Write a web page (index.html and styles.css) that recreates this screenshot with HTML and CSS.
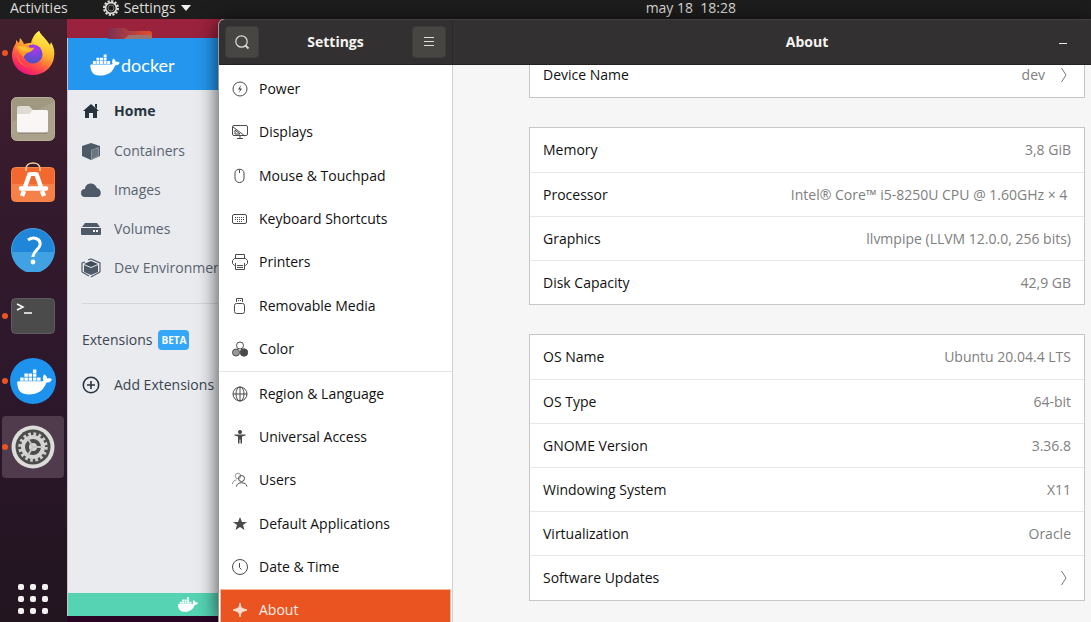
FILE: index.html
```html
<!DOCTYPE html>
<html lang="en">
<head>
  <meta charset="UTF-8" />
  <meta name="viewport" content="width=device-width, initial-scale=1.0" />
  <title>Settings - About</title>
  <link rel="stylesheet" href="styles.css">
</head>
<body>

  <!-- Shared shapes -->
  <svg class="sprite" width="0" height="0" aria-hidden="true">
    <symbol id="whale" viewBox="0 3 24 18">
      <path d="M5 6.1h2.4v2.3H5zM7.9 6.1h2.4v2.3H7.9zM10.9 6.1h2.4v2.3h-2.4zM10.9 3.4h2.4v2.3h-2.4zM2.1 8.8h2.4v2.3H2.1zM5 8.8h2.4v2.3H5zM7.9 8.8h2.4v2.3H7.9zM10.9 8.8h2.4v2.3h-2.4zM13.8 8.8h2.4v2.3h-2.4z"/>
      <path d="M23.763 9.89c-.065-.051-.672-.51-1.954-.51-.338.001-.676.03-1.01.087-.248-1.7-1.653-2.53-1.716-2.566l-.344-.199-.226.327c-.284.438-.49.922-.612 1.43-.23.97-.09 1.882.403 2.661-.595.332-1.55.413-1.744.42H.751a.751.751 0 0 0-.75.748 11.376 11.376 0 0 0 .692 4.062c.545 1.428 1.355 2.48 2.41 3.124 1.18.723 3.1 1.137 5.275 1.137.983.003 1.963-.086 2.93-.266a12.248 12.248 0 0 0 3.823-1.389c.98-.567 1.86-1.288 2.61-2.136 1.252-1.418 1.998-2.997 2.553-4.4h.221c1.372 0 2.215-.549 2.68-1.009.309-.293.55-.65.707-1.046z"/>
    </symbol>
  </svg>

  <header class="topbar">
    <button type="button" class="activities">Activities</button>
    <button type="button" class="app-menu">
      <svg width="16" height="16" viewBox="0 0 16 16" fill="none" stroke="#deddda">
        <circle cx="8" cy="8" r="7" stroke-width="2" stroke-dasharray="2.2 1.46"/>
        <circle cx="8" cy="8" r="5.4" stroke-width="1.6"/>
        <circle cx="8" cy="8" r="3" stroke="#777" stroke-width="1"/>
      </svg>
      Settings
      <svg width="10" height="6" viewBox="0 0 10 6" fill="#f2f2f2"><path d="M0 0h10L5 6z"/></svg>
    </button>
    <time class="clock">may 18&nbsp; 18:28</time>
  </header>

  <div class="desktop">

    <!-- Dock -->
    <nav class="dock" aria-label="Dock">
      <div class="dock-apps">
        <button type="button" class="dock-app running" aria-label="Firefox">
          <svg width="44" height="46" viewBox="0 0 44 46">
            <defs>
              <linearGradient id="fox" x1=".8" y1=".1" x2=".3" y2="1">
                <stop offset="0" stop-color="#fff44f"/>
                <stop offset=".35" stop-color="#ffb52e"/>
                <stop offset=".6" stop-color="#ff6a3d"/>
                <stop offset=".85" stop-color="#fb2c5d"/>
                <stop offset="1" stop-color="#e31587"/>
              </linearGradient>
              <linearGradient id="tail" x1=".6" y1="0" x2=".5" y2="1">
                <stop offset="0" stop-color="#fff44f"/>
                <stop offset=".5" stop-color="#ffc933"/>
                <stop offset="1" stop-color="#ff8a2e" stop-opacity="0"/>
              </linearGradient>
              <radialGradient id="globe" cx=".6" cy=".2" r=".8">
                <stop offset="0" stop-color="#b435e8"/>
                <stop offset=".5" stop-color="#7b45dc"/>
                <stop offset="1" stop-color="#4f50c0"/>
              </radialGradient>
            </defs>
            <path d="M28 1c1 3 4 5 7 9 2 2 3 4 4 5l1-3c3 5 4 10 3 15-1 10-10 18-21 18C10 45 1 36 1 25c0-5 2-9 4-12v-3l3 3 1-5c2 2 3 4 4 6 3-1 5-1 7-1 1-4 3-9 8-12z" fill="url(#fox)"/>
            <path d="M28 1c1 3 4 5 7 9 5 5 6 13 3 20-2 4-5 6-8 7 4-6 3-13-1-17-4-3-6-6-7-9 1-4 3-8 6-10z" fill="url(#tail)"/>
            <circle cx="22" cy="24" r="9.5" fill="url(#globe)"/>
            <path d="M6 24c1 6 5 11 11 13-6-1-11-6-11-13z" fill="#ff8b26"/>
            <path d="M5 17c4-3 9-3 12-1 2 2 4 2 6 2-1 3-4 4-7 5-1 1-3 2-3 4-3-2-6-6-8-10z" fill="#ff9a2a"/>
            <path d="M6 17c4-2 8-1 11 1 2 1 4 1 6-1-1 3-4 4-6 5-4 0-8-2-11-5z" fill="#ffbc35"/>
          </svg>
        </button>
        <button type="button" class="dock-app" aria-label="Files">
          <svg width="44" height="44" viewBox="0 0 44 44">
            <rect x=".5" y=".5" width="43" height="43" rx="5" fill="#a19882" stroke="#b7ae98"/>
            <path d="M1 25L43 5v34a4 4 0 0 1-4 4H5a4 4 0 0 1-4-4z" fill="#aba28c"/>
            <path d="M6 11a2 2 0 0 1 2-2h10l4 4h13a2 2 0 0 1 2 2v10H6z" fill="#dedbd2"/>
            <path d="M6 17h12l4-4h13a2 2 0 0 1 2 2v18a3 3 0 0 1-3 3H9a3 3 0 0 1-3-3z" fill="#f8f7f5"/>
            <path d="M7 36h29" stroke="#7f7765"/>
          </svg>
        </button>
        <button type="button" class="dock-app" aria-label="Ubuntu Software">
          <svg width="44" height="44" viewBox="0 0 44 44">
            <rect x=".5" y="5.500" width="43" height="34" rx="4" fill="#f2682e" stroke="#f78548"/>
            <path d="M1 22h42v14a3 3 0 0 1-3 3H4a3 3 0 0 1-3-3z" fill="#f58148"/>
            <path d="M15 9V7c0-8 14-8 14 0v2" fill="none" stroke="#f5cf96" stroke-width="1.6"/>
            <g fill="none" stroke="#fff">
              <path d="M19 11L14 25M25 11l5 14" stroke-width="4.500"/>
              <path d="M18.500 12h7" stroke-width="4"/>
              <path d="M10 26.500h25" stroke-width="4.500" stroke-linecap="round"/>
              <path d="M13 29l-2 5M31 29l2 5" stroke-width="4.500"/>
            </g>
          </svg>
        </button>
        <button type="button" class="dock-app" aria-label="Help">
          <svg width="44" height="44" viewBox="0 0 44 44">
            <circle cx="22" cy="22" r="21.500" fill="#1f86d9" stroke="#47a3e6"/>
            <path d="M1 24h42a21 21 0 0 1-42 0z" fill="#40a1e3"/>
            <path d="M17 12c6-4 13-1 12 5-1 5-7 6-7 12" fill="none" stroke="#fff" stroke-width="3"/>
            <circle cx="22" cy="34" r="2.400" fill="#fff"/>
          </svg>
        </button>
        <button type="button" class="dock-app running" aria-label="Terminal">
          <svg width="44" height="36" viewBox="0 0 44 36">
            <rect x=".5" y=".5" width="43" height="35" rx="4" fill="#4b4b4b" stroke="#5d5d5d"/>
            <path d="M6 6l6 3-6 3M13 15h8" fill="none" stroke="#fff" stroke-width="1.500"/>
          </svg>
        </button>
        <button type="button" class="dock-app running" aria-label="Docker Desktop">
          <svg width="46" height="46" viewBox="0 0 46 46">
            <circle cx="23" cy="23" r="23" fill="#1e93ee"/>
            <use href="#whale" x="7" y="11" width="35" height="26" fill="#fff"/>
          </svg>
        </button>
        <button type="button" class="dock-app running focused" aria-label="Settings">
          <svg width="44" height="44" viewBox="0 0 44 44" fill="none">
            <circle cx="22" cy="22" r="21.500" fill="#dcdcda"/>
            <circle cx="22" cy="22" r="17.500" fill="#4c4c4a"/>
            <circle cx="22" cy="22" r="13" stroke="#cfcfcd" stroke-width="3.500" stroke-dasharray="2.700 2.405"/>
            <circle cx="22" cy="22" r="10" stroke="#d4d4d2" stroke-width="4"/>
            <circle cx="22" cy="22" r="4" fill="#d8d8d6"/>
            <path d="M22 22h9M22 22l-5-8M22 22l-5 8" stroke="#c4c4c2" stroke-width="2"/>
          </svg>
        </button>
      </div>
      <button type="button" class="show-apps" aria-label="Show Applications">
        <span></span><span></span><span></span>
        <span></span><span></span><span></span>
        <span></span><span></span><span></span>
      </button>
    </nav>

    <!-- Docker Desktop window -->
    <div class="workspace">
      <svg class="desktop-folder" width="44" height="11" viewBox="0 0 44 11">
        <defs>
          <linearGradient id="folder"><stop offset="0" stop-color="#7c2f55"/><stop offset="1" stop-color="#e2502c"/></linearGradient>
        </defs>
        <path d="M0 11V3a3 3 0 0 1 3-3h14l4 3h20a3 3 0 0 1 3 3v5z" fill="url(#folder)"/>
        <path d="M0 11h16l5-4h20a3 3 0 0 1 3 3v1z" fill="#9b7472"/>
      </svg>
      <section class="docker">
        <header class="docker-header">
          <svg width="30" height="22" fill="#fff"><use href="#whale"/></svg>
          <span>docker</span>
        </header>
        <nav class="docker-nav">
          <a href="#" class="current">
            <svg width="20" height="20" viewBox="0 0 20 20" fill="#27343f"><path d="M10 3l8 7h-2v7h-4v-5H8v5H4v-7H2l8-7zM14 3h2v5l-2-2z"/></svg>
            Home
          </a>
          <a href="#">
            <svg width="20" height="20" viewBox="0 0 20 20"><path d="M10 2l9 3v10l-9 4-9-4V5z" fill="#4f5a69"/><path d="M10 9l8-3v9l-8 4z" fill="#8a929d"/><path d="M12 9v8M14 8v8M16 8v7" stroke="#4f5a69"/></svg>
            Containers
          </a>
          <a href="#">
            <svg width="20" height="20" viewBox="0 0 20 20" fill="#4f5a69"><path d="M4 17a4 4 0 0 1 0-8c0-6 9-8 12-1 5 1 5 9 0 9z"/></svg>
            Images
          </a>
          <a href="#">
            <svg width="20" height="20" viewBox="0 0 20 20" fill="#4f5a69"><path d="M4 4h12l3 4H1z"/><path d="M0 9h20v6a1 1 0 0 1-1 1H1a1 1 0 0 1-1-1z"/><path d="M12 11h2v2h-2zM15 11h2v2h-2z" fill="#fff"/></svg>
            Volumes
          </a>
          <a href="#">
            <svg width="20" height="20" viewBox="0 0 20 20"><path d="M10 3l7 3-7 3-7-3z" fill="#414c5b"/><path d="M3 7l7 3 7-3v7l-7 3-7-3z" fill="#4f5a69"/><path d="M7 2l3-1 9 4v9M1 14V5l3-1M1 14l7 4M19 14l-9 5" fill="none" stroke="#4f5a69" stroke-width="1.200"/></svg>
            Dev Environments
          </a>
        </nav>
        <div class="extensions">
          <h2>Extensions <span class="badge">BETA</span></h2>
          <a href="#">
            <svg width="18" height="18" viewBox="0 0 18 18" fill="none" stroke="#27343f" stroke-width="1.600"><circle cx="9" cy="9" r="7.700"/><path d="M9 5v8M5 9h8"/></svg>
            Add Extensions
          </a>
        </div>
        <footer class="docker-footer">
          <svg width="20" height="15" fill="#fff"><use href="#whale"/></svg>
        </footer>
      </section>
    </div>

    <!-- Settings window -->
    <section class="settings">
      <aside class="sidebar">
        <header class="titlebar">
          <button type="button" class="tool" aria-label="Search">
            <svg width="16" height="16" viewBox="0 0 16 16" fill="none" stroke="#dedddb" stroke-width="1.200"><circle cx="7.500" cy="7.500" r="5.700"/><path d="M11.500 11.500l3 3" stroke-width="1.800"/></svg>
          </button>
          <h2>Settings</h2>
          <button type="button" class="tool" aria-label="Menu">
            <svg width="16" height="16" viewBox="0 0 16 16" stroke="#dedddb"><path d="M3 3.500h10M3 7.500h10M3 11.500h10"/></svg>
          </button>
        </header>
        <nav class="panels">
          <div class="panel-group hardware">
            <a href="#"><svg viewBox="0 0 16 16"><circle cx="8" cy="8" r="7"/><path class="solid" d="M9 4L6 8.500h2L7 12l3-4.500H8z" stroke="none"/></svg>Power</a>
            <a href="#"><svg viewBox="0 0 16 16"><rect x=".5" y="1.500" width="15" height="10" rx="1.500"/><path d="M1 3l12 9M3 6v4h5zM5 14.500h6M8 12v2"/></svg>Displays</a>
            <a href="#"><svg viewBox="0 0 16 16"><path d="M3 5c0-5 9-5 9 0v5c0 6-9 6-9 0zM7.500 1.500V5"/></svg>Mouse &amp; Touchpad</a>
            <a href="#"><svg viewBox="0 0 16 16"><rect x=".5" y="3.500" width="14" height="9" rx="1.500"/><path d="M3 6.500h9M3 8.500h9M5 10.500h6" stroke-dasharray="1 1"/></svg>Keyboard Shortcuts</a>
            <a href="#"><svg viewBox="0 0 16 16"><path d="M3.500 4V.5h9V4M3 11.500H2.500l-2-2v-3l2-2h11l2 2v3l-2 2H13M3.500 9v6.500h9V9M5 11.500h6M5 13.500h6"/></svg>Printers</a>
            <a href="#"><svg viewBox="0 0 16 16"><rect x="2.500" y="5.500" width="10" height="10" rx="2"/><path d="M4.500 4V.5h6V4M6 2.500h1M8 2.500h1"/></svg>Removable Media</a>
            <a href="#"><svg viewBox="0 0 16 16"><circle cx="8" cy="4.500" r="3.500"/><circle cx="4" cy="11.500" r="3.500" fill="#999"/><circle class="solid" cx="12" cy="11.500" r="3.700"/></svg>Color</a>
          </div>
          <div class="panel-group">
            <a href="#"><svg viewBox="0 0 16 16"><circle cx="8" cy="8" r="7"/><ellipse cx="8" cy="8" rx="4" ry="7"/><path d="M1 8h14M8 1v14"/></svg>Region &amp; Language</a>
            <a href="#"><svg viewBox="0 0 16 16"><circle class="solid" cx="8" cy="3" r="1.600"/><path class="solid" d="M2.500 5.500h11v1l-3.500 1v7H8.500v-4h-1v4H6v-7l-3.500-1z" stroke="none"/></svg>Universal Access</a>
            <a href="#"><svg viewBox="0 0 16 16"><g stroke="#999"><circle cx="6" cy="4" r="2.800"/><path d="M.5 12c0-3 2-4 4-4"/></g><circle cx="9.500" cy="6.500" r="3"/><path d="M4.500 14.500c0-5 10-5 10.500 0"/></svg>Users</a>
            <a href="#"><svg viewBox="0 0 16 16"><path class="solid" d="M8 1l2 5h5l-4 3 1.500 5L8 11l-4.500 3L5 9 1 6h5z" stroke="none"/></svg>Default Applications</a>
            <a href="#"><svg viewBox="0 0 16 16"><circle cx="8" cy="8" r="7.500"/><path d="M7.500 4v4.500l2 2"/></svg>Date &amp; Time</a>
            <a href="#" class="selected" aria-current="page"><svg viewBox="0 0 16 16"><path d="M8 1c1 5 1 5 7 7-6 2-6 2-7 7-1-5-1-5-7-7 6-2 6-2 7-7z" fill="#fbdccf" stroke="#fbdccf"/></svg>About</a>
          </div>
        </nav>
      </aside>

      <main class="content">
        <header class="titlebar">
          <h1>About</h1>
          <button type="button" class="minimize" aria-label="Minimize"><span></span></button>
        </header>
        <div class="scroll">
          <ul class="card first">
            <li><button type="button" class="row">Device Name <span class="value">dev</span>
              <svg width="8" height="16" viewBox="0 0 8 16" fill="none" stroke="#777"><path d="M1.500 1l4.500 7-4.500 7"/></svg></button></li>
          </ul>
          <ul class="card">
            <li class="row">Memory <span class="value">3,8 GiB</span></li>
            <li class="row">Processor <span class="value">Intel® Core™ i5-8250U CPU @ 1.60GHz × 4&nbsp;</span></li>
            <li class="row">Graphics <span class="value">llvmpipe (LLVM 12.0.0, 256 bits)</span></li>
            <li class="row">Disk Capacity <span class="value">42,9 GB</span></li>
          </ul>
          <ul class="card">
            <li class="row">OS Name <span class="value">Ubuntu 20.04.4 LTS</span></li>
            <li class="row">OS Type <span class="value">64-bit</span></li>
            <li class="row">GNOME Version <span class="value">3.36.8</span></li>
            <li class="row">Windowing System <span class="value">X11</span></li>
            <li class="row">Virtualization <span class="value">Oracle</span></li>
            <li><button type="button" class="row">Software Updates <span class="value"></span>
              <svg width="8" height="16" viewBox="0 0 8 16" fill="none" stroke="#777"><path d="M1.500 1l4.500 7-4.500 7"/></svg></button></li>
          </ul>
        </div>
      </main>
    </section>

  </div>

</body>
</html>
```
FILE: styles.css
```css
* {
  box-sizing: border-box;
}

body {
  margin: 0;
  height: 100vh;
  display: flex;
  flex-direction: column;
  overflow: hidden;
  font-family: "Open Sans", "Noto Sans", sans-serif;
  font-size: 14px;
  line-height: 20px;
  color: #111;
}

.sprite {
  position: absolute;
}

button {
  padding: 0;
  border: none;
  background: none;
  font: inherit;
  color: inherit;
  cursor: pointer;
}

a {
  color: inherit;
  text-decoration: none;
}

h1,
h2 {
  margin: 0;
  font-size: 14px;
}

ul {
  list-style: none;
  margin: 0;
  padding: 0;
}

svg {
  display: block;
  flex: none;
}

/* Top bar */
.topbar {
  flex: none;
  display: grid;
  grid-template-columns: auto auto 1fr;
  align-items: center;
  height: 19px;
  padding: 0 0 8px 10px;
  background: #1d1d1d;
  color: #deddda;
  line-height: 12px;
}

.app-menu {
  display: flex;
  align-items: center;
  gap: 5px;
  margin-left: 35px;
}

.clock {
  padding-right: 355px;
  text-align: right;
}

.desktop {
  flex: 1;
  min-height: 0;
  display: flex;
  background: linear-gradient(#9c223c, #5e1638 50%, #2a0423 96%);
}

/* Dock */
.dock {
  flex: none;
  width: 67px;
  display: flex;
  flex-direction: column;
  justify-content: space-between;
  align-items: center;
  padding: 3px 2px 8px 0;
  background: linear-gradient(#42202d, #341a2d 30%, #2a162a 70%, #22151f);
}

.dock-apps {
  flex: 0 1 456px;
  display: flex;
  flex-direction: column;
  justify-content: space-between;
}

.dock-app {
  position: relative;
  display: flex;
  align-items: center;
  justify-content: center;
  width: 62px;
  height: 62px;
  border-radius: 4px;
}

.dock-app.focused {
  background: #4f3b4b;
}

.dock-app.running::before {
  content: "";
  position: absolute;
  left: 0;
  top: 28px;
  width: 6px;
  height: 6px;
  border-radius: 50%;
  background: #e95420;
}

.show-apps {
  display: grid;
  grid-template-columns: repeat(3, 6px);
  gap: 6px;
}

.show-apps span {
  height: 6px;
  border-radius: 2px;
  background: #f2f1f0;
}

/* Docker Desktop */
.workspace {
  flex: none;
  width: 151px;
  position: relative;
  padding: 19px 0 6px;
  overflow: hidden;
}

.desktop-folder {
  position: absolute;
  left: 41px;
  top: 9px;
}

.docker {
  height: 100%;
  display: flex;
  flex-direction: column;
  border-left: 1px solid #c9c5cd;
  background: #e9ebee;
  color: #5a6472;
  white-space: nowrap;
}

.docker-header {
  display: flex;
  align-items: center;
  gap: 1px;
  height: 52px;
  padding: 2px 0 0 22px;
  background: #2496ed;
  color: white;
  font-family: Lato, sans-serif;
  font-size: 18px;
}

.docker-nav {
  height: 214px;
  margin-left: 14px;
  padding-top: 1px;
  border-bottom: 1px solid #d3d6db;
}

.docker-nav a {
  display: flex;
  align-items: center;
  gap: 13px;
  height: 39px;
  margin-left: -1px;
}

.docker-nav .current {
  height: 40px;
  font-weight: bold;
  color: #27343f;
}

.extensions {
  flex: 1;
  padding: 26px 0 0 14px;
  color: #3a4551;
}

.extensions h2 {
  display: flex;
  align-items: center;
  gap: 6px;
  font-weight: normal;
}

.badge {
  padding: 0 3px;
  border-radius: 4px;
  background: #35a7f8;
  color: white;
  font-size: 10px;
  font-weight: bold;
}

.extensions a {
  display: flex;
  align-items: center;
  gap: 14px;
  margin-top: 25px;
}

.docker-footer {
  flex: none;
  display: flex;
  align-items: center;
  justify-content: flex-end;
  height: 23px;
  padding-right: 20px;
  background: #55d3b3;
}

/* Settings window */
.settings {
  flex: 1;
  min-width: 0;
  display: flex;
  z-index: 1;
  border-left: 1px solid #98989b;
  border-radius: 6px 0 0 0;
  box-shadow: 0 2px 20px rgba(0, 0, 0, 0.7);
  background: #f6f6f6;
}

.titlebar {
  flex: none;
  display: flex;
  align-items: center;
  justify-content: space-between;
  height: 46px;
  padding: 0 6px;
  border-top: 1px solid #403e3e;
  border-bottom: 1px solid #232122;
  background: #333031;
  color: #f5f4f2;
}

.sidebar {
  flex: none;
  width: 234px;
  display: flex;
  flex-direction: column;
  border-right: 1px solid #d0d0d0;
  border-top-left-radius: 6px;
  background: white;
}

.sidebar .titlebar {
  margin-right: -1px;
  border-right: 1px solid #2a2829;
  border-top-left-radius: 6px;
}

.tool {
  display: flex;
  align-items: center;
  justify-content: center;
  width: 34px;
  height: 32px;
  border: 1px solid #3f3d3c;
  border-radius: 4px;
  background: #484643;
}

.panels {
  flex: 1;
  min-height: 0;
  padding-top: 2px;
  overflow: hidden;
}

.panel-group {
  display: grid;
  grid-auto-rows: 1fr;
  height: 260px;
}

.panel-group.hardware {
  height: 305px;
  border-bottom: 1px solid #e4e4e4;
}

.panel-group a {
  display: flex;
  align-items: center;
  gap: 11px;
  padding-left: 13px;
}

.panel-group svg {
  width: 16px;
  height: 16px;
  fill: none;
  stroke: #4a4a4a;
}

.panel-group .solid {
  fill: #4a4a4a;
}

.panel-group .selected {
  margin: 0 1px;
  padding-left: 11px;
  border: 1px solid #f5b7a0;
  background: #e95420;
  color: #fdeee8;
}

/* About panel */
.content {
  flex: 1;
  min-width: 0;
  display: flex;
  flex-direction: column;
}

.content h1 {
  flex: 1;
  padding-left: 102px;
  text-align: center;
}

.minimize {
  display: flex;
  justify-content: center;
  width: 20px;
  margin-right: 12px;
  padding: 10px 0 7px;
}

.minimize span {
  width: 8px;
  height: 1px;
  background: #e8e7e5;
}

.scroll {
  flex: 1;
  min-height: 0;
  padding: 0 6px 0 76px;
  overflow: hidden;
}

.card {
  margin-bottom: 29px;
  border: 1px solid #c6c6c6;
  background: white;
}

.card.first {
  margin-top: -13px;
}

.card li + li {
  border-top: 1px solid #e6e6e6;
}

.row {
  display: flex;
  align-items: center;
  width: 100%;
  height: 44px;
  padding: 0 13px;
}

.row .value {
  margin-left: auto;
  color: #808080;
}

.row svg {
  margin: 0 3px 0 15px;
}
```
